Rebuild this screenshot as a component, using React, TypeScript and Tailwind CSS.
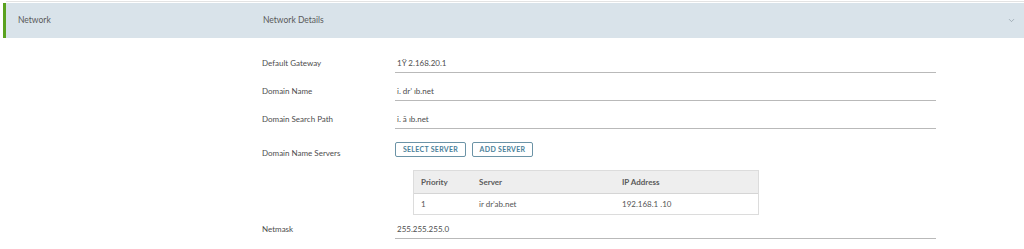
import { ChevronDown } from 'lucide-react';

const fields = [
  { label: 'Default Gateway', value: '1\u0178 2.168.20.1' },
  { label: 'Domain Name', value: 'i. dr\u2019 ıb.net' },
  { label: 'Domain Search Path', value: 'i. \u0101 ıb.net' },
];

const FieldRow = ({ label, value, h = 'h-[28px]' }: { label: string; value: string; h?: string }) => (
  <div className={`flex items-end ${h}`}>
    <div className="w-[133px] pb-[4px] text-[8px] text-[#4d4d4d]">{label}</div>
    <div className="w-[541px] border-b border-[#b9b9b9] pb-[3px] pl-[2px] text-[8px] text-[#4d4d4d]">{value}</div>
  </div>
);

const App = () => {
  return (
    <div className="w-[1024px] h-[249px] bg-white overflow-hidden" style={{ fontFamily: 'Lato, sans-serif' }}>
      <div className="h-[3px] border-t border-white">
        <div className="ml-[6px] h-[1px] bg-[#e3e3e3]" />
      </div>
      <div className="flex h-[35px] ml-[3px] border-l-[3px] border-[#5aa220] bg-[#d9e3ea] items-center">
        <div className="w-[257px] pl-[12px] text-[8.5px] text-[#5a5a5a]">Network</div>
        <div className="flex-1 text-[8.5px] text-[#5a5a5a]">Network Details</div>
        <ChevronDown className="mr-[8px] h-[9px] w-[9px] text-[#8a97a0]" strokeWidth={1.75} />
      </div>

      <div className="pl-[262px] pt-[7px]">
        {fields.map((f) => (
          <FieldRow key={f.label} label={f.label} value={f.value} />
        ))}

        <div className="flex items-start mt-[17px]">
          <div className="w-[133px] pt-[1px] text-[8px] text-[#4d4d4d]">Domain Name Servers</div>
          <div className="flex gap-[6px] -mt-[4px]">
            <button className="h-[15px] w-[71px] rounded-[2px] border border-[#6b93a6] text-[7px] font-bold tracking-[0.3px] text-[#4a7f9a]">
              SELECT SERVER
            </button>
            <button className="h-[15px] w-[61px] rounded-[2px] border border-[#6b93a6] text-[7px] font-bold tracking-[0.3px] text-[#4a7f9a]">
              ADD SERVER
            </button>
          </div>
        </div>

        <div className="ml-[151px] mt-[11px] w-[346px] border border-[#dcdcdc] text-[8px]">
          <div className="flex h-[23px] items-center bg-[#eeeeee] border-b border-[#d5d5d5] font-bold text-[#5a5a5a]">
            <div className="w-[65px] pl-[7px]">Priority</div>
            <div className="w-[143px]">Server</div>
            <div>IP Address</div>
          </div>
          <div className="flex h-[20px] items-center text-[#555]">
            <div className="w-[65px] pl-[7px]">1</div>
            <div className="w-[143px]">{'ir dr\u2019ab.net'}</div>
            <div>192.168.1 .10</div>
          </div>
        </div>

        <FieldRow label="Netmask" value="255.255.255.0" h="h-[24px]" />
      </div>
    </div>
  );
};

export default App;
